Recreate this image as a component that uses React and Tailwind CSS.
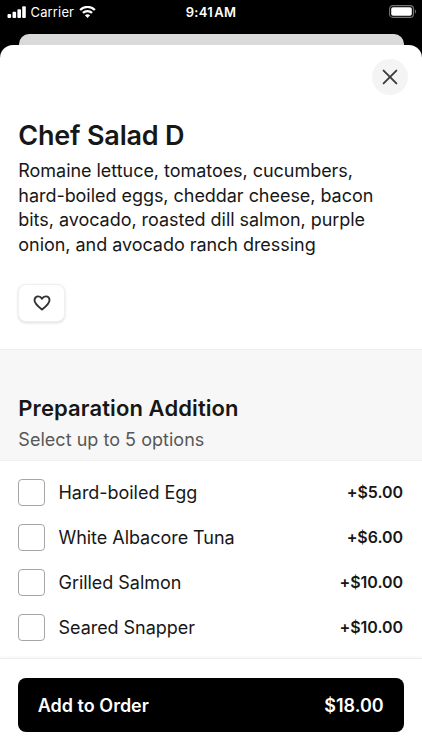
import { useState } from 'react';
import { clsx } from 'clsx';

const OPTIONS = [
  { id: 'egg', label: 'Hard-boiled Egg', price: '+$5.00' },
  { id: 'tuna', label: 'White Albacore Tuna', price: '+$6.00' },
  { id: 'salmon', label: 'Grilled Salmon', price: '+$10.00' },
  { id: 'snapper', label: 'Seared Snapper', price: '+$10.00' },
];

function SignalIcon() {
  return (
    <svg width="19" height="13" viewBox="0 0 19 13" fill="currentColor" aria-hidden="true">
      <rect x="0.5" y="8" width="3.6" height="4" rx="0.9" />
      <rect x="5.5" y="5.8" width="3.6" height="6.2" rx="0.9" />
      <rect x="10.4" y="3.2" width="3.6" height="8.8" rx="0.9" />
      <rect x="15.2" y="0.3" width="3.6" height="11.7" rx="0.9" />
    </svg>
  );
}

function WifiIcon() {
  return (
    <svg width="17" height="13" viewBox="0 0 17 13" fill="none" stroke="currentColor" aria-hidden="true">
      <path d="M1.1 4C5.2-.1 11.8-.1 15.9 4" strokeWidth="2.2" />
      <path d="M3.9 6.9C6.4 4.4 10.6 4.4 13.1 6.9" strokeWidth="2.2" />
      <path d="M8.5 12 5.9 9.2C7.4 8 9.6 8 11.1 9.2Z" fill="currentColor" stroke="none" />
    </svg>
  );
}

function BatteryIcon() {
  return (
    <svg width="28" height="13" viewBox="0 0 28 13" fill="none" aria-hidden="true">
      <rect x="0.6" y="0.6" width="23.8" height="11.8" rx="3.2" stroke="#777" strokeWidth="1.1" />
      <rect x="2.2" y="2.2" width="20.6" height="8.6" rx="1.8" fill="#fff" />
      <path d="M25.8 4.3C27.4 5 27.4 8 25.8 8.7Z" fill="#777" />
    </svg>
  );
}

function StatusBar() {
  return (
    <div className="grid h-[34px] shrink-0 grid-cols-3 items-start text-white">
      <div className="flex items-center pt-1 pl-[7px]">
        <SignalIcon />
        <span className="ml-[4.5px] text-[13px] leading-4 tracking-[0.15px]">Carrier</span>
        <span className="ml-[5px]">
          <WifiIcon />
        </span>
      </div>
      <span className="pt-1 text-center text-[13px] leading-4 font-semibold tracking-[0.3px]">
        9:41<span className="ml-px">AM</span>
      </span>
      <div className="flex justify-end pt-[5px] pr-[5px]">
        <BatteryIcon />
      </div>
    </div>
  );
}

function OptionRow({ option, checked, onToggle }) {
  return (
    <li>
      <button
        type="button"
        role="checkbox"
        aria-checked={checked}
        onClick={onToggle}
        className="flex h-[45px] w-full items-center text-left"
      >
        <span
          className={clsx(
            'size-[27px] shrink-0 rounded-[4px] border border-[#a6a6a6]',
            checked ? 'bg-black' : 'bg-white',
          )}
        />
        <span className="ml-[13.5px] grow text-[18px] tracking-[-0.04px]">{option.label}</span>
        <span className="pb-0.5 text-[16px] font-semibold tracking-[-0.05px]">{option.price}</span>
      </button>
    </li>
  );
}

export default function App() {
  const [selected, setSelected] = useState([]);

  function toggle(id) {
    setSelected((prev) => (prev.includes(id) ? prev.filter((s) => s !== id) : [...prev, id]));
  }

  return (
    <div className="flex h-[750px] w-[422px] flex-col overflow-hidden bg-black font-['Inter',sans-serif] text-[#171717]">
      <StatusBar />
      <div className="mx-[18.5px] h-[11px] shrink-0 rounded-t-[10px] bg-[#dadada]" />

      <main className="flex grow flex-col rounded-t-[13px] bg-white">
        <header className="h-[304px] px-[18.3px]">
          <div className="-mr-[4px] flex justify-end pt-[13.5px]">
            <button
              type="button"
              aria-label="Close"
              className="flex size-9 items-center justify-center rounded-full bg-[#f4f4f4] text-[#3c3c3c]"
            >
              <svg width="16" height="16" viewBox="0 0 16 16" fill="none" stroke="currentColor" strokeWidth="1.9" strokeLinecap="round">
                <path d="M1.6 1.6 14.4 14.4M14.4 1.6 1.6 14.4" />
              </svg>
            </button>
          </div>
          <h1 className="mt-[25px] text-[27px] leading-[32px] font-semibold tracking-[-0.2px]">Chef Salad D</h1>
          <p className="mt-[7.5px] text-[18px] leading-[24.7px] tracking-[-0.04px]">
            Romaine lettuce, tomatoes, cucumbers,
            <br />
            hard-boiled eggs, cheddar cheese, bacon
            <br />
            bits, avocado, roasted dill salmon, purple
            <br />
            onion, and avocado ranch dressing
          </p>
          <button
            type="button"
            aria-label="Favorite"
            className="mt-[26.2px] flex h-[38px] w-[47px] items-center justify-center rounded-[8px] border border-[#f0f0f0] bg-white text-[#333] shadow-[0_1px_3px_rgba(0,0,0,0.14)]"
          >
            <svg width="18" height="16" viewBox="0 0 18 16" fill="none" stroke="currentColor" strokeWidth="1.9" strokeLinejoin="round">
              <path d="M9 14.6C5.4 11.8 1.5 8.8 1.5 5.3 1.5 3 3.1 1.4 5.2 1.4 6.8 1.4 8.2 2.2 9 3.7 9.8 2.2 11.2 1.4 12.8 1.4 14.9 1.4 16.5 3 16.5 5.3 16.5 8.8 12.6 11.8 9 14.6Z" />
            </svg>
          </button>
        </header>

        <section aria-labelledby="addition-heading">
          <div className="h-[112px] border-y border-[#efefef] bg-[#f7f7f7] px-[18.3px] pt-[44px]">
            <h2 id="addition-heading" className="text-[22px] leading-[28px] font-semibold tracking-[0.1px]">
              Preparation Addition
            </h2>
            <p className="mt-[5px] text-[18px] leading-[25px] tracking-[0.03px] text-[#575757]">
              Select up to 5 options
            </p>
          </div>
          <ul className="h-[197px] pt-[9px] pr-[19px] pl-[18px]">
            {OPTIONS.map((option) => (
              <OptionRow
                key={option.id}
                option={option}
                checked={selected.includes(option.id)}
                onToggle={() => toggle(option.id)}
              />
            ))}
          </ul>
        </section>

        <footer className="grow border-t border-[#efefef] px-[18.3px] pt-[19px] shadow-[0_-1px_2px_rgba(0,0,0,0.05)]">
          <button
            type="button"
            className="flex h-[54px] w-full items-center justify-between rounded-[8px] bg-black pr-5 pl-[19.5px] text-[18px] font-semibold text-white"
          >
            <span>Add to Order</span>
            <span>$18.00</span>
          </button>
        </footer>
      </main>
    </div>
  );
}
